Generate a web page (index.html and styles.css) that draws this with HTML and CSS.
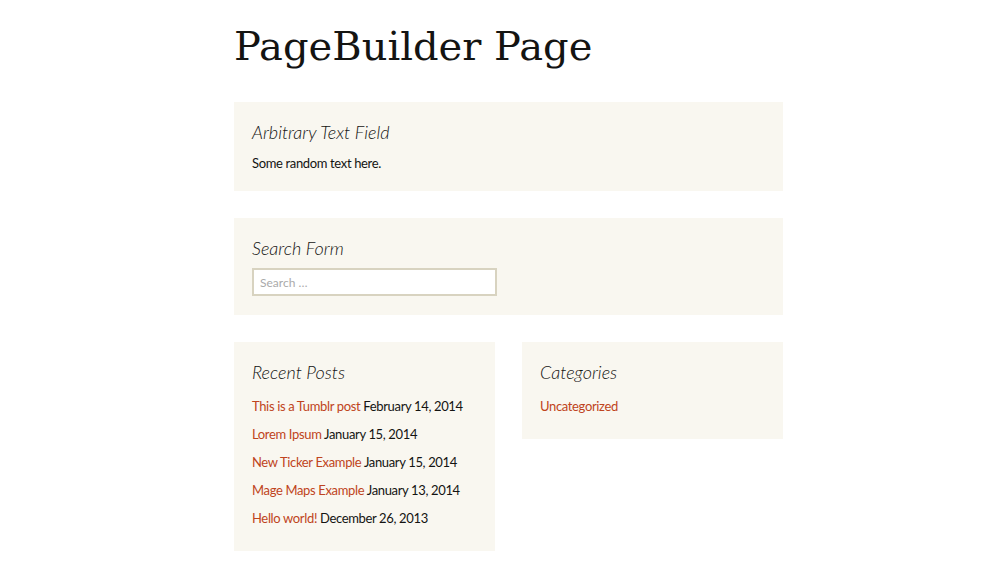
FILE: index.html
```html
<!DOCTYPE html>
<html lang="en">
<head>
    <meta charset="UTF-8">
    <meta name="viewport" content="width=device-width, initial-scale=1.0">
    <title>PageBuilder Page</title>
    <link rel="stylesheet" href="styles.css">
</head>
<body>
    <div class="page">
        <h1 class="page-title">PageBuilder Page</h1>

        <div class="widget">
            <h3 class="widget-title">Arbitrary Text Field</h3>
            <div class="text-widget">Some random text here.</div>
        </div>

        <div class="widget">
            <h3 class="widget-title">Search Form</h3>
            <form class="search-form">
                <input type="search" class="search-field" placeholder="Search …">
            </form>
        </div>

        <div class="widget-row">
            <div class="widget">
                <h3 class="widget-title">Recent Posts</h3>
                <ul class="post-list">
                    <li><a href="#">This is a Tumblr post</a> <span class="post-date">February 14, 2014</span></li>
                    <li><a href="#">Lorem Ipsum</a> <span class="post-date">January 15, 2014</span></li>
                    <li><a href="#">New Ticker Example</a> <span class="post-date">January 15, 2014</span></li>
                    <li><a href="#">Mage Maps Example</a> <span class="post-date">January 13, 2014</span></li>
                    <li><a href="#">Hello world!</a> <span class="post-date">December 26, 2013</span></li>
                </ul>
            </div>
            <div class="widget">
                <h3 class="widget-title">Categories</h3>
                <ul class="post-list">
                    <li><a href="#">Uncategorized</a></li>
                </ul>
            </div>
        </div>
    </div>
</body>
</html>
```

FILE: styles.css
```css
body {
    margin: 0;
    padding: 0 0 0 17px;
    background-color: #fff;
    color: #141412;
    font-family: "Lato", "Liberation Sans", sans-serif;
    font-size: 13px;
    letter-spacing: -0.35px;
}
.page {
    width: 549px;
    margin: 0 auto;
    padding-top: 18px;
}
.page-title {
    font-family: "DejaVu Serif", serif;
    font-weight: normal;
    font-size: 40px;
    line-height: 56px;
    letter-spacing: 0;
    margin: 0 0 28px 0;
    color: #141412;
}
.widget {
    background-color: #f9f7f0;
    padding: 18px 18px 17px 18px;
    margin-bottom: 27px;
}
.widget-title {
    font-family: "Lato", sans-serif;
    font-style: italic;
    font-weight: 300;
    font-size: 18px;
    line-height: 24px;
    letter-spacing: 0;
    margin: 0 0 8px 0;
    color: #141412;
}
.text-widget {
    line-height: 22px;
}
.search-form {
    margin: 0;
}
.search-field {
    display: block;
    width: 245px;
    height: 28px;
    box-sizing: border-box;
    border: 2px solid #d8d3c0;
    background: #fff;
    padding: 0 6px;
    font-family: "Lato", sans-serif;
    font-size: 12px;
    margin: 4px 0 2px 0;
}
.search-field::placeholder {
    color: #aaa;
}
.widget-row {
    display: flex;
    gap: 27px;
    align-items: flex-start;
}
.widget-row .widget {
    flex: 1;
}
.post-list {
    list-style: none;
    margin: 5px 0 2px 0;
    padding: 0;
}
.post-list li {
    line-height: 28px;
}
.post-list a {
    color: #bf4420;
    text-decoration: none;
}
```
